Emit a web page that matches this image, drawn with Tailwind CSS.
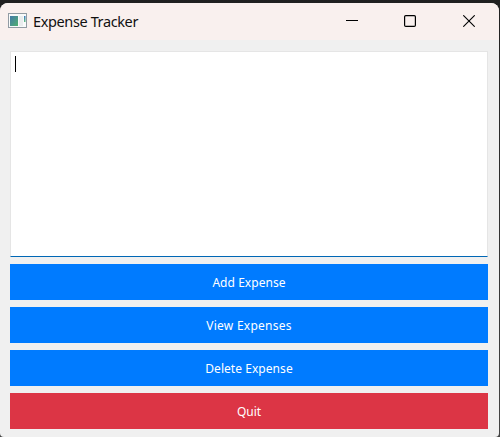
<!DOCTYPE html>
<html lang="en">
<head>
<meta charset="utf-8">
<title>Expense Tracker</title>
<script src="https://cdn.jsdelivr.net/npm/@tailwindcss/browser@4"></script>
</head>
<body class="w-[500px] h-[437px] overflow-hidden bg-[#202020] font-['Noto_Sans',sans-serif]">
<div class="h-[437px] pt-[3px] pr-px bg-linear-to-b from-[#202020] to-[#444444]">
<main class="h-[434px] w-[499px] rounded-t-lg rounded-b-[4px] overflow-hidden bg-[#f0f0f0] flex flex-col">
  <header class="h-[37px] shrink-0 bg-[#f9f0ee] flex items-start pl-2">
    <svg class="mt-[10px] w-[19px] h-[16px] shrink-0" viewBox="0 0 19 16">
      <defs>
        <linearGradient id="g" x1="0" y1="0" x2="1" y2="1"><stop offset="0" stop-color="#4379a8"/><stop offset="1" stop-color="#50b070"/></linearGradient>
        <linearGradient id="b" x1="0" y1="0" x2="0" y2="1"><stop offset="0" stop-color="#3d78c0"/><stop offset="1" stop-color="#62bd80"/></linearGradient>
      </defs>
      <rect x=".5" y=".5" width="18" height="14" fill="#f8fafa" stroke="#929ba3"/>
      <rect x="2" y="3" width="8" height="10" fill="url(#g)"/>
      <rect x="11" y="3" width="4" height="10" fill="#e9eced"/>
      <rect x="16" y="3" width="1.5" height="6" fill="url(#b)"/>
    </svg>
    <h1 class="mt-[8px] ml-[6px] text-[14.5px] leading-5 tracking-[-0.38px] text-[#111] whitespace-nowrap">Expense Tracker</h1>
    <div class="mt-3 ml-auto mr-[24px] flex">
      <svg class="w-3 h-3" viewBox="0 0 12 12"><path d="M0 5.5H12" stroke="#000" fill="none"/></svg>
      <svg class="ml-[46px] w-3 h-3" viewBox="0 0 12 12"><rect x=".6" y=".6" width="10.8" height="10.8" rx="1.2" stroke="#000" stroke-width="1.2" fill="none"/></svg>
      <svg class="ml-[47px] w-3 h-3" viewBox="0 0 12 12"><path d="M.3 .3L11.7 11.7M11.7 .3L.3 11.7" stroke="#000" stroke-width="1.1" fill="none"/></svg>
    </div>
  </header>
  <section class="pl-[10px] pr-[11px] pt-[11px] flex flex-col gap-[7px]">
    <div class="h-[206px] bg-white border border-[#e5e5e5] border-b-[#0067b5] pl-1 pt-1">
      <div class="w-px h-4 bg-black"></div>
    </div>
    <button class="h-9 bg-[#007bff] text-white text-[12px] leading-4 tracking-[0.05px] pt-px">Add Expense</button>
    <button class="h-9 bg-[#007bff] text-white text-[12px] leading-4 tracking-[0.25px] pt-px">View Expenses</button>
    <button class="h-9 bg-[#007bff] text-white text-[12px] leading-4 tracking-[0.05px] pt-px">Delete Expense</button>
    <button class="h-9 bg-[#dc3545] text-white text-[12px] leading-4 pt-px">Quit</button>
  </section>
</main>
</div>
</body>
</html>
